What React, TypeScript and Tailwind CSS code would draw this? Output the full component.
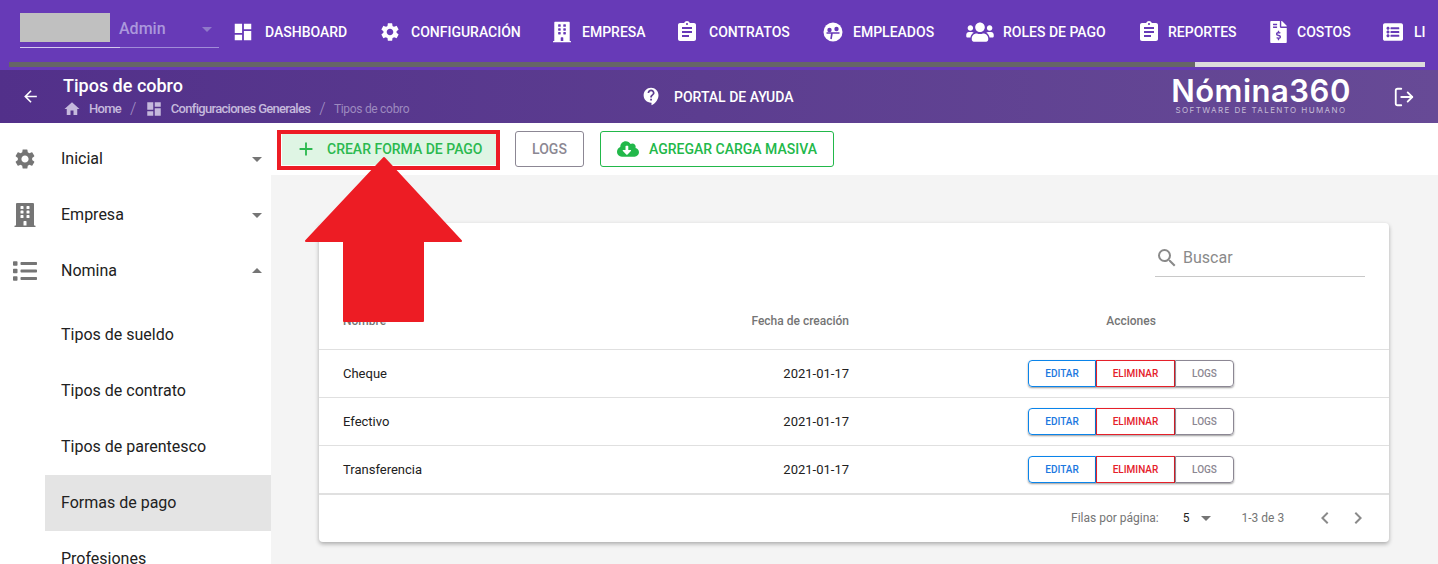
import { MdDashboard, MdSettings, MdHome, MdSearch, MdArrowBack, MdAdd, MdArrowDropDown, MdArrowDropUp, MdChevronLeft, MdChevronRight, MdAssignment, MdContactSupport } from 'react-icons/md';
import { FaBuilding, FaUsers, FaFileInvoiceDollar, FaListAlt, FaCloudDownloadAlt, FaList } from 'react-icons/fa';
import { LogOut } from 'lucide-react';

function FaceIcon() {
	return (
		<svg className="w-[20px] h-[20px]" viewBox="0 0 20 20">
			<circle cx="10" cy="10" r="9.5" fill="#ffffff" />
			<circle cx="6.5" cy="8" r="2.2" fill="#673ab7" />
			<circle cx="13.5" cy="7" r="2.2" fill="#673ab7" />
			<path d="M3.5 11 H16.5 M9 11 L8 17" stroke="#673ab7" strokeWidth="1.6" fill="none" />
		</svg>
	);
}

const navItems = [
	{ label: 'Dashboard', icon: <MdDashboard className="w-[22px] h-[22px]" />, width: 'w-[147px]', gap: 'mr-[11px]' },
	{ label: 'Configuración', icon: <MdSettings className="w-[22px] h-[22px]" />, width: 'w-[174px]', gap: 'mr-[10px]' },
	{ label: 'Empresa', icon: <FaBuilding className="w-[18px] h-[22px]" />, width: 'w-[122px]', gap: 'mr-[11px]' },
	{ label: 'Contratos', icon: <MdAssignment className="w-[24px] h-[24px]" />, width: 'w-[148px]', gap: 'mr-[10px]' },
	{ label: 'Empleados', icon: <FaceIcon />, width: 'w-[143px]', gap: 'mr-[10px]' },
	{ label: 'Roles de pago', icon: <FaUsers className="w-[28px] h-[22px]" />, width: 'w-[171px]', gap: 'mr-[9px]' },
	{ label: 'Reportes', icon: <MdAssignment className="w-[24px] h-[24px]" />, width: 'w-[133px]', gap: 'mr-[7px]' },
	{ label: 'Costos', icon: <FaFileInvoiceDollar className="w-[17px] h-[22px]" />, width: 'w-[112px]', gap: 'mr-[10px]' },
	{ label: 'Liquidación', icon: <FaListAlt className="w-[22px] h-[20px]" />, width: 'w-[140px]', gap: 'mr-[10px]' },
];

const subItems = ['Tipos de sueldo', 'Tipos de contrato', 'Tipos de parentesco', 'Formas de pago', 'Profesiones'];

const rows = ['Cheque', 'Efectivo', 'Transferencia'];

function SideItem({ icon, label, open }: { icon: React.ReactNode; label: string; open?: boolean }) {
	return (
		<div className="flex items-center h-14 pr-[2px] text-[#212121]">
			<div className="w-[61px] pl-[13px] text-[#757575]">{icon}</div>
			<span className="flex-1 text-base">{label}</span>
			{open ? <MdArrowDropUp className="w-6 h-6 text-[#757575]" /> : <MdArrowDropDown className="w-6 h-6 text-[#757575]" />}
		</div>
	);
}

function App() {
	return (
		<div className="relative w-[1438px] h-[564px] overflow-hidden bg-white font-['Roboto',sans-serif]">
			{/* Top navigation */}
			<div className="h-[70px] bg-[#673ab7] pl-[9px] pr-[13px]">
				<div className="h-[62px] flex items-start overflow-hidden">
					<div className="relative w-[199px] shrink-0 ml-[11px] h-[48px] border-b border-[#a18cd8]">
						<div className="flex items-center h-[30px] mt-[14px] pl-[99px] text-base font-medium text-[#ab98dc]">
							<span className="flex-1">Admin</span>
							<MdArrowDropDown className="w-6 h-6 text-[#8f79c9]" />
						</div>
						<div className="absolute left-0 bottom-[-1px] w-[100px] border-b border-[#d5cbee]" />
						<div className="absolute left-0 top-[13px] w-[90px] h-[29px] bg-[#c0c0c0]" />
					</div>
					<div className="flex shrink-0 ml-[13px] h-[62px] pt-[2px] items-center">
						{navItems.map((item) => (
							<div key={item.label} className={`flex items-center shrink-0 text-white ${item.width}`}>
								<span className={`flex items-center ${item.gap}`}>{item.icon}</span>
								<span className="text-sm font-medium uppercase">{item.label}</span>
							</div>
						))}
					</div>
				</div>
				<div className="h-[5px] bg-[#dcdcdc]">
					<div className="h-full w-[1186px] bg-[#666666]" />
				</div>
			</div>

			{/* Page title bar */}
			<div className="h-[53px] flex items-center bg-gradient-to-r from-[#52308a] to-[#674a96] text-white">
				<div className="w-[63px] pl-[21px]">
					<MdArrowBack className="w-[19px] h-[19px]" />
				</div>
				<div className="w-[578px]">
					<div className="text-lg leading-[22px] font-medium">Tipos de cobro</div>
					<div className="flex items-center h-[20px] mt-[2px] text-[13px] font-medium tracking-[-0.7px] text-[#c5b9dc]">
						<MdHome className="w-[18px] h-[18px] mr-[8px]" />
						<span>Home</span>
						<span className="mx-[9px] text-[16px] font-light text-[#a594c6]">/</span>
						<MdDashboard className="w-[18px] h-[18px] mr-[8px]" />
						<span>Configuraciones Generales</span>
						<span className="mx-[9px] text-[16px] font-light text-[#a594c6]">/</span>
						<span className="font-normal tracking-[-0.3px] text-[12px] text-[#9d8abf]">Tipos de cobro</span>
					</div>
				</div>
				<div className="w-[531px] flex items-center">
					<MdContactSupport className="w-[21px] h-[21px]" />
					<span className="ml-[12px] text-sm font-medium">PORTAL DE AYUDA</span>
				</div>
				<div className="w-[178px] flex flex-col items-center">
					<div className="font-['Inter',sans-serif] text-[31px] leading-[26px] font-semibold tracking-[0.5px] mb-[1px]">Nómina360</div>
					<div className="font-['Inter',sans-serif] text-[8px] leading-[10px] tracking-[1.4px] text-[#c5bcd6] whitespace-nowrap">SOFTWARE DE TALENTO HUMANO</div>
				</div>
				<LogOut className="w-[22px] h-[22px] ml-[43px]" strokeWidth={2} />
			</div>

			<div className="flex h-[441px]">
				{/* Sidebar */}
				<div className="w-[271px] shrink-0 pt-[8px] overflow-hidden">
					<SideItem icon={<MdSettings className="w-6 h-6" />} label="Inicial" />
					<SideItem icon={<FaBuilding className="w-6 h-6" />} label="Empresa" />
					<SideItem icon={<FaList className="w-6 h-6" />} label="Nomina" open />
					<div className="pt-2">
						{subItems.map((item) => (
							<div key={item} className={`ml-[45px] h-14 flex items-center pl-4 text-base text-[#212121] ${item === 'Formas de pago' ? 'bg-[#e4e4e4]' : ''}`}>
								{item}
							</div>
						))}
					</div>
				</div>

				<div className="flex-1 min-w-0">
					{/* Action bar */}
					<div className="h-[52px] flex items-center pl-[9px] gap-4">
						<button className="flex items-center w-[214px] h-[32px] ml-[2px] pl-[13px] text-sm font-medium text-[#2bb94f] bg-[#dff5e4]">
							<MdAdd className="w-[22px] h-[22px] mr-[10px]" />
							<span>CREAR FORMA DE PAGO</span>
						</button>
						<button className="w-[69px] h-[36px] ml-[3px] rounded-[3px] border border-[#8c8794] text-sm font-medium text-[#8b8792]">LOGS</button>
						<button className="flex items-center h-[36px] w-[234px] pl-[16px] rounded-[3px] border border-[#22b84a] text-sm font-medium text-[#22b84a]">
							<FaCloudDownloadAlt className="w-[22px] h-[20px] mr-[10px]" />
							<span>AGREGAR CARGA MASIVA</span>
						</button>
					</div>

					{/* Table */}
					<div className="h-[389px] bg-[#f4f4f4] pt-[48px] pl-[48px]">
						<div className="w-[1070px] h-[319px] bg-white rounded-[4px] shadow-[0_2px_4px_rgba(0,0,0,0.3)]">
							<div className="h-[64px] flex items-start justify-end pr-[24px] pt-[18px]">
								<div className="w-[210px] h-[36px] flex items-center pb-[2px] border-b border-[#c8c8c8] text-[#8a8a8a]">
									<MdSearch className="w-6 h-6 mr-[4px]" />
									<span className="text-base">Buscar</span>
								</div>
							</div>
							<div className="grid grid-cols-[277px_277px_516px] h-[63px] items-center pt-[5px] border-b border-[#e0e0e0] text-xs font-medium text-[#757575]">
								<div className="pl-[24px]">Nombre</div>
								<div className="pr-[24px] text-right">Fecha de creación</div>
								<div className="text-center">Acciones</div>
							</div>
							{rows.map((row) => (
								<div key={row} className="grid grid-cols-[277px_277px_516px] h-[48px] items-center border-b border-[#e0e0e0] text-[13px] text-[#212121]">
									<div className="pl-[24px]">{row}</div>
									<div className="pr-[24px] text-right">2021-01-17</div>
									<div className="flex justify-center text-[10px] font-medium">
										<button className="w-[68px] h-[27px] rounded-l-[4px] border border-[#0a84ea] text-[#1c78e0] shadow-[0_1px_2px_rgba(0,0,0,0.4)]">EDITAR</button>
										<button className="w-[79px] h-[27px] border border-[#e5202a] text-[#e5202a] shadow-[0_1px_2px_rgba(0,0,0,0.4)]">ELIMINAR</button>
										<button className="w-[59px] h-[27px] rounded-r-[4px] border border-[#8c8794] text-[#8b8792] shadow-[0_1px_2px_rgba(0,0,0,0.4)]">LOGS</button>
									</div>
								</div>
							))}
							<div className="h-[48px] flex items-center pb-[1px] border-t border-[#e0e0e0] text-xs text-[#757575]">
								<span className="ml-[752px]">Filas por página:</span>
								<span className="ml-[24px] text-[#212121]">5</span>
								<MdArrowDropDown className="w-6 h-6 ml-[4px]" />
								<span className="ml-[24px]">1-3 de 3</span>
								<MdChevronLeft className="w-6 h-6 ml-[29px] text-[#8a8a8a]" />
								<MdChevronRight className="w-6 h-6 ml-[9px] text-[#8a8a8a]" />
							</div>
						</div>
					</div>
				</div>
			</div>

			{/* Annotation over the screenshot */}
			<div className="absolute left-[277px] top-[130px] w-[223px] h-[40px] border-[4px] border-[#ed1c24]" />
			<svg className="absolute left-0 top-0 pointer-events-none" width="1438" height="564" viewBox="0 0 1438 564">
				<path d="M384 158 L461 241 L423 241 L423 321 L344 321 L344 241 L306 241 Z" fill="#ed1c24" stroke="#ed1c24" strokeWidth="2" strokeLinejoin="round" />
			</svg>
		</div>
	);
}

export default App;
